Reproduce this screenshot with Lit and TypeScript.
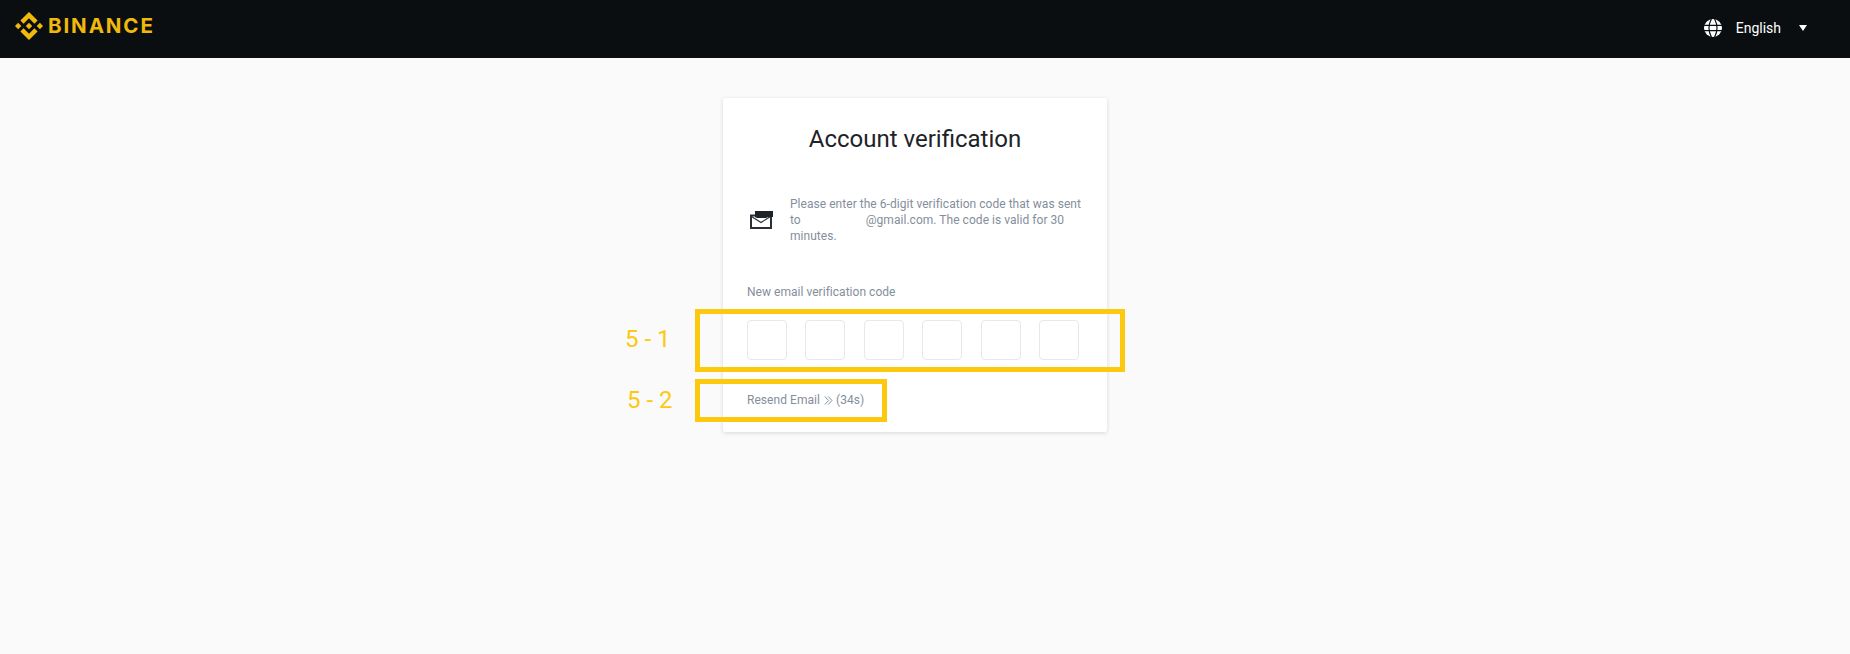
import { LitElement, html, css } from "lit";
import { customElement } from "lit/decorators.js";

@customElement("app-root")
export class AppRoot extends LitElement {
  static styles = css`
    :host { display: block; position: relative; width: 1850px; height: 654px; background: #fafafa; overflow: hidden; font-family: "Roboto", "Liberation Sans", sans-serif; }
    .header { height: 58px; background: #0b0e11; display: flex; align-items: center; padding: 0 43px 0 15px; }
    .brand { display: flex; align-items: center; gap: 5px; color: #f0b90b; padding-bottom: 6px; }
    .mark { width: 28px; height: 28px; fill: #f0b90b; }
    .wordmark { font-family: "Inter", sans-serif; font-weight: 700; font-size: 20.5px; letter-spacing: 1.9px; line-height: 24px; }
    .spacer { flex: 1; }
    .lang { display: flex; align-items: center; color: #fff; font-size: 14px; line-height: 20px; padding-bottom: 2px; }
    .globe { width: 18px; height: 18px; margin-right: 14px; }
    .globe circle { fill: #fff; }
    .globe path { fill: none; stroke: #0b0e11; stroke-width: 1.3; }
    .caret { width: 0; height: 0; border-left: 4.5px solid transparent; border-right: 4.5px solid transparent; border-top: 6px solid #fff; margin-left: 18px; }
    .main { display: flex; padding: 40px 0 0 723px; }
    .card { width: 384px; height: 334px; box-sizing: border-box; background: #fff; border-radius: 2px; box-shadow: 0 1px 4px rgba(0,0,0,.14); padding: 24px 24px 0; display: flex; flex-direction: column; }
    h1 { margin: 0; font-weight: 400; font-size: 24px; line-height: 34px; color: #1e2329; text-align: center; }
    .notice { display: flex; align-items: center; margin-top: 40px; }
    .env { width: 24px; height: 20px; margin: 0 16px 0 3px; flex: none; }
    .notice p { margin: 0; font-size: 12px; letter-spacing: 0.04px; line-height: 16px; color: #848e9c; width: 295px; }
    .gap { display: inline-block; width: 62px; }
    .label { margin-top: 40px; font-size: 12px; letter-spacing: 0.03px; line-height: 16px; color: #848e9c; }
    .codes { display: flex; justify-content: space-between; width: 332px; margin-top: 20px; }
    .code { width: 40px; height: 40px; box-sizing: border-box; border: 1px solid #e6e8ea; border-radius: 4px; background: #fff; }
    .resend { display: flex; align-items: center; margin-top: 32px; font-size: 12px; letter-spacing: 0.05px; line-height: 16px; color: #848e9c; }
    .chev { width: 9px; height: 9px; margin: 0 3.5px; fill: none; stroke: #848e9c; stroke-width: 1; }
    .frame { position: absolute; box-sizing: border-box; border: 5px solid #fdc90f; }
    .f1 { left: 695px; top: 309px; width: 430px; height: 63px; }
    .f2 { left: 695px; top: 379px; width: 192px; height: 43px; }
    .tag { position: absolute; color: #fdc90f; font-family: "Roboto", sans-serif; font-size: 24px; line-height: 28px; white-space: pre; }
    .t1 { left: 625px; top: 325px; }
    .t2 { left: 627px; top: 386px; }
  `;

  render() {
    return html`
      <header class="header">
        <div class="brand">
          <svg class="mark" viewBox="0 0 126.61 126.61">
            <path d="M38.73 53.2L63.3 28.63l24.59 24.59 14.3-14.3L63.3 0 24.42 38.9z"/>
            <path d="M0 63.31l14.3-14.3 14.3 14.3-14.3 14.3z"/>
            <path d="M38.73 73.41L63.3 97.97l24.59-24.58 14.31 14.29-38.9 38.91-38.9-38.88z"/>
            <path d="M98.28 63.31l14.3-14.3 14.3 14.3-14.3 14.3z"/>
            <path d="M77.83 63.3L63.3 48.76 52.56 59.5l-1.24 1.24-2.54 2.54 14.52 14.53L77.83 63.3z"/>
          </svg>
          <span class="wordmark">BINANCE</span>
        </div>
        <div class="spacer"></div>
        <div class="lang">
          <svg class="globe" viewBox="0 0 20 20">
            <circle cx="10" cy="10" r="10"/>
            <path d="M0 7h20M0 13h20M8.2 0C5 6 5 14 8.2 20M11.8 0C15 6 15 14 11.8 20"/>
          </svg>
          <span>English</span>
          <span class="caret"></span>
        </div>
      </header>
      <main class="main">
        <section class="card">
          <h1>Account verification</h1>
          <div class="notice">
            <svg class="env" viewBox="0 0 24 20">
              <path d="M1 5.5h20V18H1z" fill="none" stroke="#2b2f36" stroke-width="2"/>
              <path d="M1.5 6.5l9.5 6 9.5-6" fill="none" stroke="#2b2f36" stroke-width="1.2"/>
              <path d="M5 1h18v6H18l-2 1H7L5 7z" fill="#1e2329"/>
            </svg>
            <p>Please enter the 6-digit verification code that was sent to <span class="gap"></span>@gmail.com. The code is valid for 30 minutes.</p>
          </div>
          <div class="label">New email verification code</div>
          <div class="codes">
            ${[0, 1, 2, 3, 4, 5].map(() => html`<div class="code"></div>`)}
          </div>
          <div class="resend">
            <span>Resend Email</span>
            <svg class="chev" viewBox="0 0 9 9"><path d="M.8.5l3.8 4-3.8 4M4.2.5l3.8 4-3.8 4"/></svg>
            <span>(34s)</span>
          </div>
        </section>
      </main>
      <div class="frame f1"></div>
      <div class="frame f2"></div>
      <div class="tag t1">5 - 1</div>
      <div class="tag t2">5 - 2</div>
    `;
  }
}
